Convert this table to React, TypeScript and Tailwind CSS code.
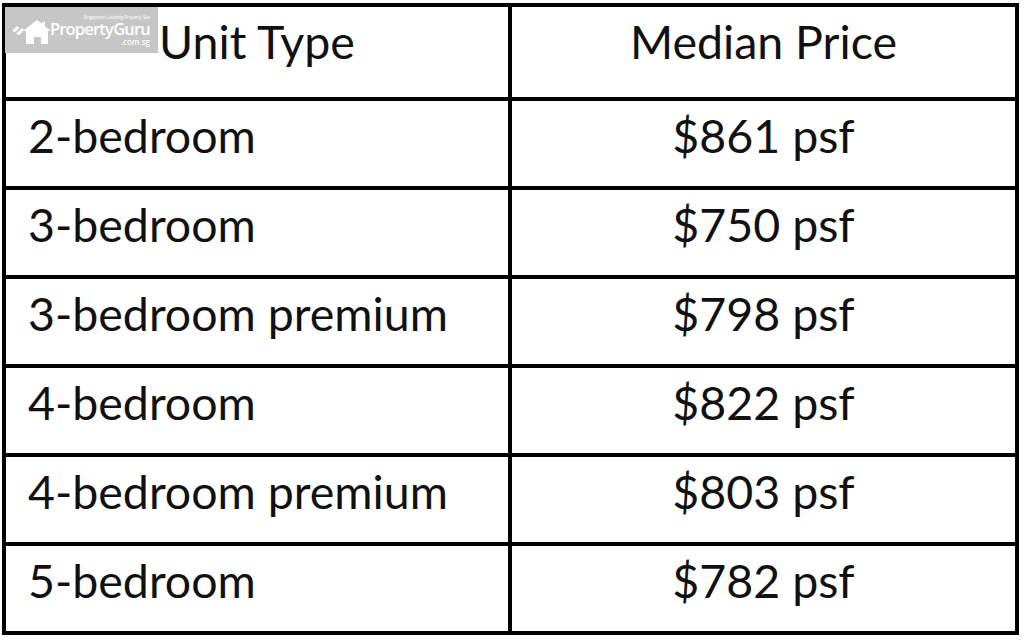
import React from "react";

const rows = [
  ["2-bedroom", "$861 psf"],
  ["3-bedroom", "$750 psf"],
  ["3-bedroom premium", "$798 psf"],
  ["4-bedroom", "$822 psf"],
  ["4-bedroom premium", "$803 psf"],
  ["5-bedroom", "$782 psf"],
];

const Logo = () => (
  <div className="absolute left-[5px] top-[7px] flex h-[46px] w-[153px] items-center bg-[#c6c6c6] pl-[6px]">
    <svg width="40" height="26" viewBox="0 0 40 26" className="mt-[4px] h-[26px] w-[40px] shrink-0">
      <path d="M1 12 L6 7 L8 9 L4 13 Z" fill="#fff" />
      <path d="M5 15 L11 9 L13 11 L8 16 Z" fill="#fff" />
      <path d="M12 12 L26 1 L40 12 L37 12 L37 25 L30 25 L30 18 L23 18 L23 25 L15 25 L15 12 Z" fill="#fff" />
      <rect x="31" y="3" width="3" height="6" fill="#fff" />
    </svg>
    <div className="ml-[1px] flex w-[98px] shrink-0 flex-col items-end leading-none text-white" style={{ fontFamily: "'Open Sans', sans-serif" }}>
      <span className="whitespace-nowrap text-[4.5px] tracking-tight">Singapore's Leading Property Site</span>
      <span className="mt-[2px] whitespace-nowrap text-[16.5px] font-semibold tracking-[-0.8px]">PropertyGuru</span>
      <span className="text-[8px] font-semibold">.com.sg</span>
    </div>
  </div>
);

export default function App() {
  return (
    <div className="relative h-[643px] w-[1024px] overflow-hidden bg-white pl-[2px] pt-[3px]" style={{ fontFamily: "Lato, 'Open Sans', sans-serif" }}>
      <div className="grid w-[1017px] grid-cols-[502px_503px] grid-rows-[90px_repeat(6,85px)] gap-[4px] bg-black p-[4px] text-[#111] text-[46.5px]">
        <div className="flex items-center justify-center bg-white pb-[20px]">Unit Type</div>
        <div className="flex items-center justify-center bg-white pb-[20px]">Median Price</div>
        {rows.map(([t, p]) => (
          <React.Fragment key={t}>
            <div className="flex items-center bg-white pb-[16px] pl-[22px]">{t}</div>
            <div className="flex items-center justify-center bg-white pb-[16px]">{p}</div>
          </React.Fragment>
        ))}
      </div>
      <Logo />
    </div>
  );
}
